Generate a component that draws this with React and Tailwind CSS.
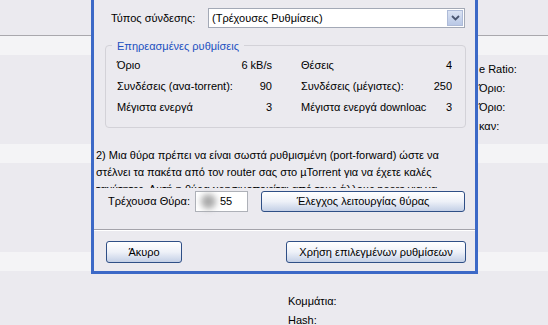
import React from "react";

const rows = [
  ["Όριο", "6 kB/s", "Θέσεις", "4"],
  ["Συνδέσεις (ανα-torrent):", "90", "Συνδέσεις (μέγιστες):", "250"],
  ["Μέγιστα ενεργά", "3", "Μέγιστα ενεργά downloac", "3"],
];

const sideLabels = ["e Ratio:", "Όριο:", "Όριο:", "καν:"];

function XpButton({ children, className = "" }) {
  return (
    <div
      className={
        "flex items-center justify-center rounded-[3px] border border-[#2f4f86] bg-gradient-to-b from-white via-[#eef1f8] to-[#c4d0e6] text-black " +
        className
      }
    >
      {children}
    </div>
  );
}

function Dialog() {
  return (
    <div className="absolute left-[91px] top-0 w-[387px] h-[274px] border-x-[3px] border-b-[3px] border-[#3c69c7] bg-[#ebeaef] flex flex-col">
      {/* connection type */}
      <div className="flex items-center h-[20px] mt-[8px]">
        <span className="pl-[17px] w-[114px]">Τύπος σύνδεσης:</span>
        <div className="w-[257px] h-[20px] border border-[#a3a9b6] bg-white flex items-center">
          <span className="pl-[3px] flex-1">(Τρέχουσες Ρυθμίσεις)</span>
          <div className="w-[16px] h-[16px] mr-px bg-gradient-to-b from-[#dbe3f3] to-[#b9c8e6] border border-[#aebbd8] flex items-center justify-center">
            <svg width="9" height="6" viewBox="0 0 9 6">
              <path d="M1 1 L4.5 4.5 L8 1" stroke="#4a5670" strokeWidth="1.8" fill="none" />
            </svg>
          </div>
        </div>
      </div>

      {/* affected settings group */}
      <div className="relative ml-[11px] mt-[17px] w-[361px] h-[83px] border border-[#d3d2d8] rounded-[4px] pl-[11px] pr-[13px] pt-[9px]">
        <span className="absolute left-[6px] -top-[8px] px-[5px] bg-[#ebeaef] text-[#2150c0]">
          Επηρεασμένες ρυθμίσεις
        </span>
        <div className="grid grid-cols-[155px_151px] gap-x-[29px]">
          {rows.map((r, i) => (
            <React.Fragment key={i}>
              <div className="flex justify-between h-[21px] items-center">
                <span>{r[0]}</span>
                <span>{r[1]}</span>
              </div>
              <div className="flex justify-between h-[21px] items-center overflow-hidden whitespace-nowrap">
                <span>{r[2]}</span>
                <span className="pl-2">{r[3]}</span>
              </div>
            </React.Fragment>
          ))}
        </div>
      </div>

      {/* port text */}
      <div className="ml-[2px] mt-[19px] h-[41px] overflow-hidden leading-[17px] whitespace-nowrap">
        <div>2) Μια θύρα πρέπει να είναι σωστά ρυθμισμένη (port-forward) ώστε να</div>
        <div>στέλνει τα πακέτα από τον router σας στο µTorrent για να έχετε καλές</div>
        <div>ταχύτητες. Αυτή η θύρα χρησιμοποιείται από τους άλλους peers για να</div>
      </div>

      {/* port row */}
      <div className="flex items-center h-[21px] mt-[3px]">
        <span className="pl-[14px] w-[101px]">Τρέχουσα Θύρα:</span>
        <div className="w-[53px] h-[21px] border border-[#aeb1b8] bg-white flex items-center">
          <div className="ml-[5px] w-[15px] h-[15px] rounded-full bg-[#a9a9a9] blur-[3px]" />
          <span className="ml-[4px]">55</span>
        </div>
        <XpButton className="ml-[13px] w-[204px] h-[21px]">Έλεγχος λειτουργίας θύρας</XpButton>
      </div>

      {/* separator */}
      <div className="mt-[17px] h-px bg-[#a4a3aa]" />
      <div className="h-px bg-white" />

      {/* bottom buttons */}
      <div className="flex items-center justify-between mt-[10px] pl-[12px] pr-[9px]">
        <XpButton className="w-[76px] h-[22px]">Άκυρο</XpButton>
        <XpButton className="w-[180px] h-[22px]">Χρήση επιλεγμένων ρυθμίσεων</XpButton>
      </div>
    </div>
  );
}

export default function App() {
  return (
    <div className="relative w-[548px] h-[325px] overflow-hidden bg-[#ebeaef] text-[11px] text-black font-['Liberation_Sans',Arial,sans-serif]">
      {/* background window content */}
      <div className="h-[35px]" />
      <div className="h-px bg-[#a9a8ad]" />
      <div className="h-[19px] bg-[#f4f4f6]" />
      <div className="pl-[479px] pt-[5px]">
        {sideLabels.map((l, i) => (
          <div key={i} className="h-[19px] flex items-center">
            {l}
          </div>
        ))}
      </div>
      <div className="mt-[8px] h-[19px] bg-[#f4f4f6]" />
      <div className="h-[89px]" />
      <div className="h-[19px] bg-[#f4f4f6]" />
      <div className="pl-[288px] pt-[21px]">
        <div className="h-[19px] flex items-center">Κομμάτια:</div>
        <div className="h-[19px] flex items-center">Hash:</div>
      </div>

      <Dialog />
    </div>
  );
}
